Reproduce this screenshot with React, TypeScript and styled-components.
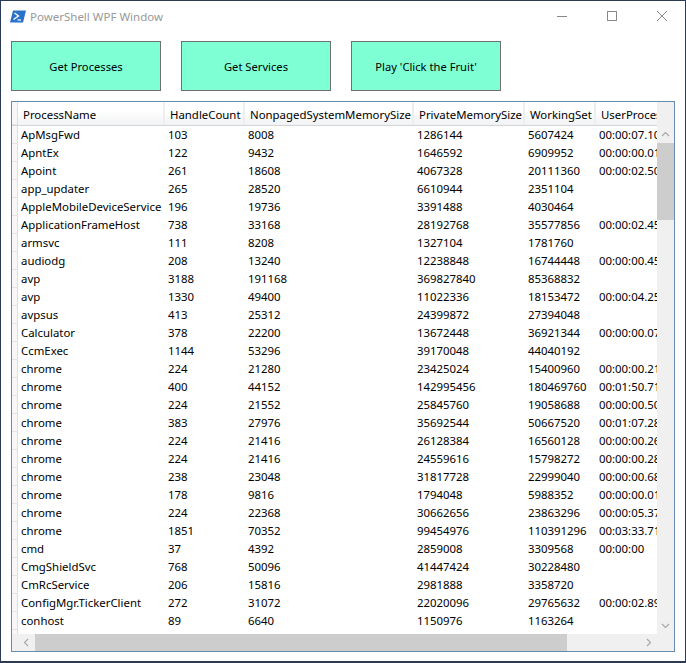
import React from "react";
import styled, { createGlobalStyle } from "styled-components";

const Global = createGlobalStyle`
  html, body { margin: 0; padding: 0; background: #fff; }
  * { box-sizing: border-box; }
`;

const Frame = styled.div`
  width: 686px; height: 663px; border: 1px solid #2b3a55; border-bottom-width: 2px; background: #fff;
  display: flex; flex-direction: column; overflow: hidden;
  font-family: "Noto Sans", "Open Sans", sans-serif; font-size: 11.4px; color: #000;
`;
const TitleBar = styled.div`
  height: 30px; flex: none; display: flex; align-items: center; padding-left: 9px; gap: 4px;
  color: #999; font-size: 11.5px;
`;
const TitleText = styled.span`flex: 1;`;
const WinButton = styled.div`
  width: 46px; height: 30px; display: flex; align-items: center; justify-content: center;
`;
const Toolbar = styled.div`
  display: flex; gap: 20px; padding: 10px; flex: none;
`;
const ActionButton = styled.button`
  width: 150px; height: 50px; background: #7fffd4; border: 1px solid #707070;
  font: inherit; font-size: 11.2px; color: #000; padding: 0;
`;
const GridBox = styled.div`
  margin: 0 10px; width: 664px; height: 551px; flex: none; border: 1px solid #688caf;
  display: grid; grid-template-columns: 1fr 17px; grid-template-rows: 1fr 17px;
`;
const Viewport = styled.div`overflow: hidden;`;
const Scroll = styled.div`width: 740px;`;
const Row = styled.div`
  display: grid; grid-template-columns: 6px 147px 80px 169px 111px 71px 150px; height: 18px; line-height: 18px;
`;
const HeaderRow = styled(Row)`
  height: 24px; line-height: 25px; border-bottom: 1px solid #d5d5d5;
  background: linear-gradient(#fff 0%, #fff 40%, #f1f2f4 100%);
`;
const Gutter = styled.div`
  border-right: 1px solid #e0e0e0; border-bottom: 1px solid #e4e4e4; background: #f7f7f8;
`;
const GutterEnd = styled.div`
  width: 6px; height: 4px; border-right: 1px solid #e0e0e0; background: #f7f7f8;
`;
const HeaderCell = styled.div`
  padding-left: 5px; border-right: 2px solid #eceef0; overflow: hidden; white-space: nowrap;
`;
const Cell = styled.div`padding-left: 3px; white-space: nowrap; overflow: hidden;`;
const VBar = styled.div`
  grid-column: 2; grid-row: 1; background: #f0f0f0; display: flex; flex-direction: column; padding-top: 24px;
`;
const HBar = styled.div`
  grid-column: 1; grid-row: 2; background: #f0f0f0; display: flex; padding-left: 6px;
`;
const Corner = styled.div`background: #f0f0f0;`;
const VThumb = styled.div`width: 17px; height: 77px; flex: none; background: #cdcdcd;`;
const HThumb = styled.div`height: 17px; width: 532px; flex: none; background: #cdcdcd;`;
const Arrow = styled.div`
  width: 17px; height: 17px; flex: none; display: flex; align-items: center; justify-content: center;
`;
const Track = styled.div`flex: 1;`;

const rows: string[][] = [
  ["ApMsgFwd","103","8008","1286144","5607424","00:00:07.1093750"],
  ["ApntEx","122","9432","1646592","6909952","00:00:00.0156250"],
  ["Apoint","261","18608","4067328","20111360","00:00:02.5000000"],
  ["app_updater","265","28520","6610944","2351104",""],
  ["AppleMobileDeviceService","196","19736","3391488","4030464",""],
  ["ApplicationFrameHost","738","33168","28192768","35577856","00:00:02.4531250"],
  ["armsvc","111","8208","1327104","1781760",""],
  ["audiodg","208","13240","12238848","16744448","00:00:00.4531250"],
  ["avp","3188","191168","369827840","85368832",""],
  ["avp","1330","49400","11022336","18153472","00:00:04.2500000"],
  ["avpsus","413","25312","24399872","27394048",""],
  ["Calculator","378","22200","13672448","36921344","00:00:00.0781250"],
  ["CcmExec","1144","53296","39170048","44040192",""],
  ["chrome","224","21280","23425024","15400960","00:00:00.2187500"],
  ["chrome","400","44152","142995456","180469760","00:01:50.7187500"],
  ["chrome","224","21552","25845760","19058688","00:00:00.5000000"],
  ["chrome","383","27976","35692544","50667520","00:01:07.2812500"],
  ["chrome","224","21416","26128384","16560128","00:00:00.2656250"],
  ["chrome","224","21416","24559616","15798272","00:00:00.2812500"],
  ["chrome","238","23048","31817728","22999040","00:00:00.6875000"],
  ["chrome","178","9816","1794048","5988352","00:00:00.0156250"],
  ["chrome","224","22368","30662656","23863296","00:00:05.3750000"],
  ["chrome","1851","70352","99454976","110391296","00:03:33.7187500"],
  ["cmd","37","4392","2859008","3309568","00:00:00"],
  ["CmgShieldSvc","768","50096","41447424","30228480",""],
  ["CmRcService","206","15816","2981888","3358720",""],
  ["ConfigMgr.TickerClient","272","31072","22020096","29765632","00:00:02.8906250"],
  ["conhost","89","6640","1150976","1163264",""],
];
const headers = ["ProcessName","HandleCount","NonpagedSystemMemorySize","PrivateMemorySize","WorkingSet","UserProcessorTime"];

const Chevron = ({ d }: { d: string }) => (
  <svg width="9" height="9" viewBox="0 0 9 9" fill="none" stroke="#a6a6a6" strokeWidth="1.1"><path d={d} /></svg>
);

export default function App() {
  return (
    <Frame>
      <Global />
      <TitleBar>
        <svg width="16" height="13" viewBox="0 0 16 13">
          <path d="M3 0.5H16L13 12.5H0Z" fill="#2a72c9" />
          <path d="M4.5 3L8.5 6L3.5 9.5" fill="none" stroke="#fff" strokeWidth="1.3" />
          <path d="M7.5 10H11" stroke="#fff" strokeWidth="1.2" />
        </svg>
        <TitleText>PowerShell WPF Window</TitleText>
        <WinButton><svg width="10" height="10" viewBox="0 0 10 10"><path d="M0 5.5H10" stroke="#888" /></svg></WinButton>
        <WinButton><svg width="10" height="10" viewBox="0 0 10 10"><rect x="0.5" y="0.5" width="9" height="9" fill="none" stroke="#888" /></svg></WinButton>
        <WinButton><svg width="10" height="10" viewBox="0 0 10 10"><path d="M0 0L10 10M10 0L0 10" stroke="#888" /></svg></WinButton>
      </TitleBar>
      <Toolbar>
        <ActionButton>Get Processes</ActionButton>
        <ActionButton>Get Services</ActionButton>
        <ActionButton>Play 'Click the Fruit'</ActionButton>
      </Toolbar>
      <GridBox>
        <Viewport>
          <Scroll>
            <HeaderRow>
              <Gutter />
              {headers.map(h => <HeaderCell key={h}>{h}</HeaderCell>)}
            </HeaderRow>
            {rows.map((r, i) => (
              <Row key={i}>
                <Gutter />
                {r.map((c, j) => <Cell key={j}>{c}</Cell>)}
              </Row>
            ))}
            <GutterEnd />
          </Scroll>
        </Viewport>
        <VBar>
          <Arrow><Chevron d="M1 6L4.5 2.5L8 6" /></Arrow>
          <VThumb />
          <Track />
          <Arrow><Chevron d="M1 3L4.5 6.5L8 3" /></Arrow>
        </VBar>
        <HBar>
          <Arrow><Chevron d="M6 1L2.5 4.5L6 8" /></Arrow>
          <HThumb />
          <Track />
          <Arrow><Chevron d="M3 1L6.5 4.5L3 8" /></Arrow>
        </HBar>
        <Corner />
      </GridBox>
    </Frame>
  );
}
